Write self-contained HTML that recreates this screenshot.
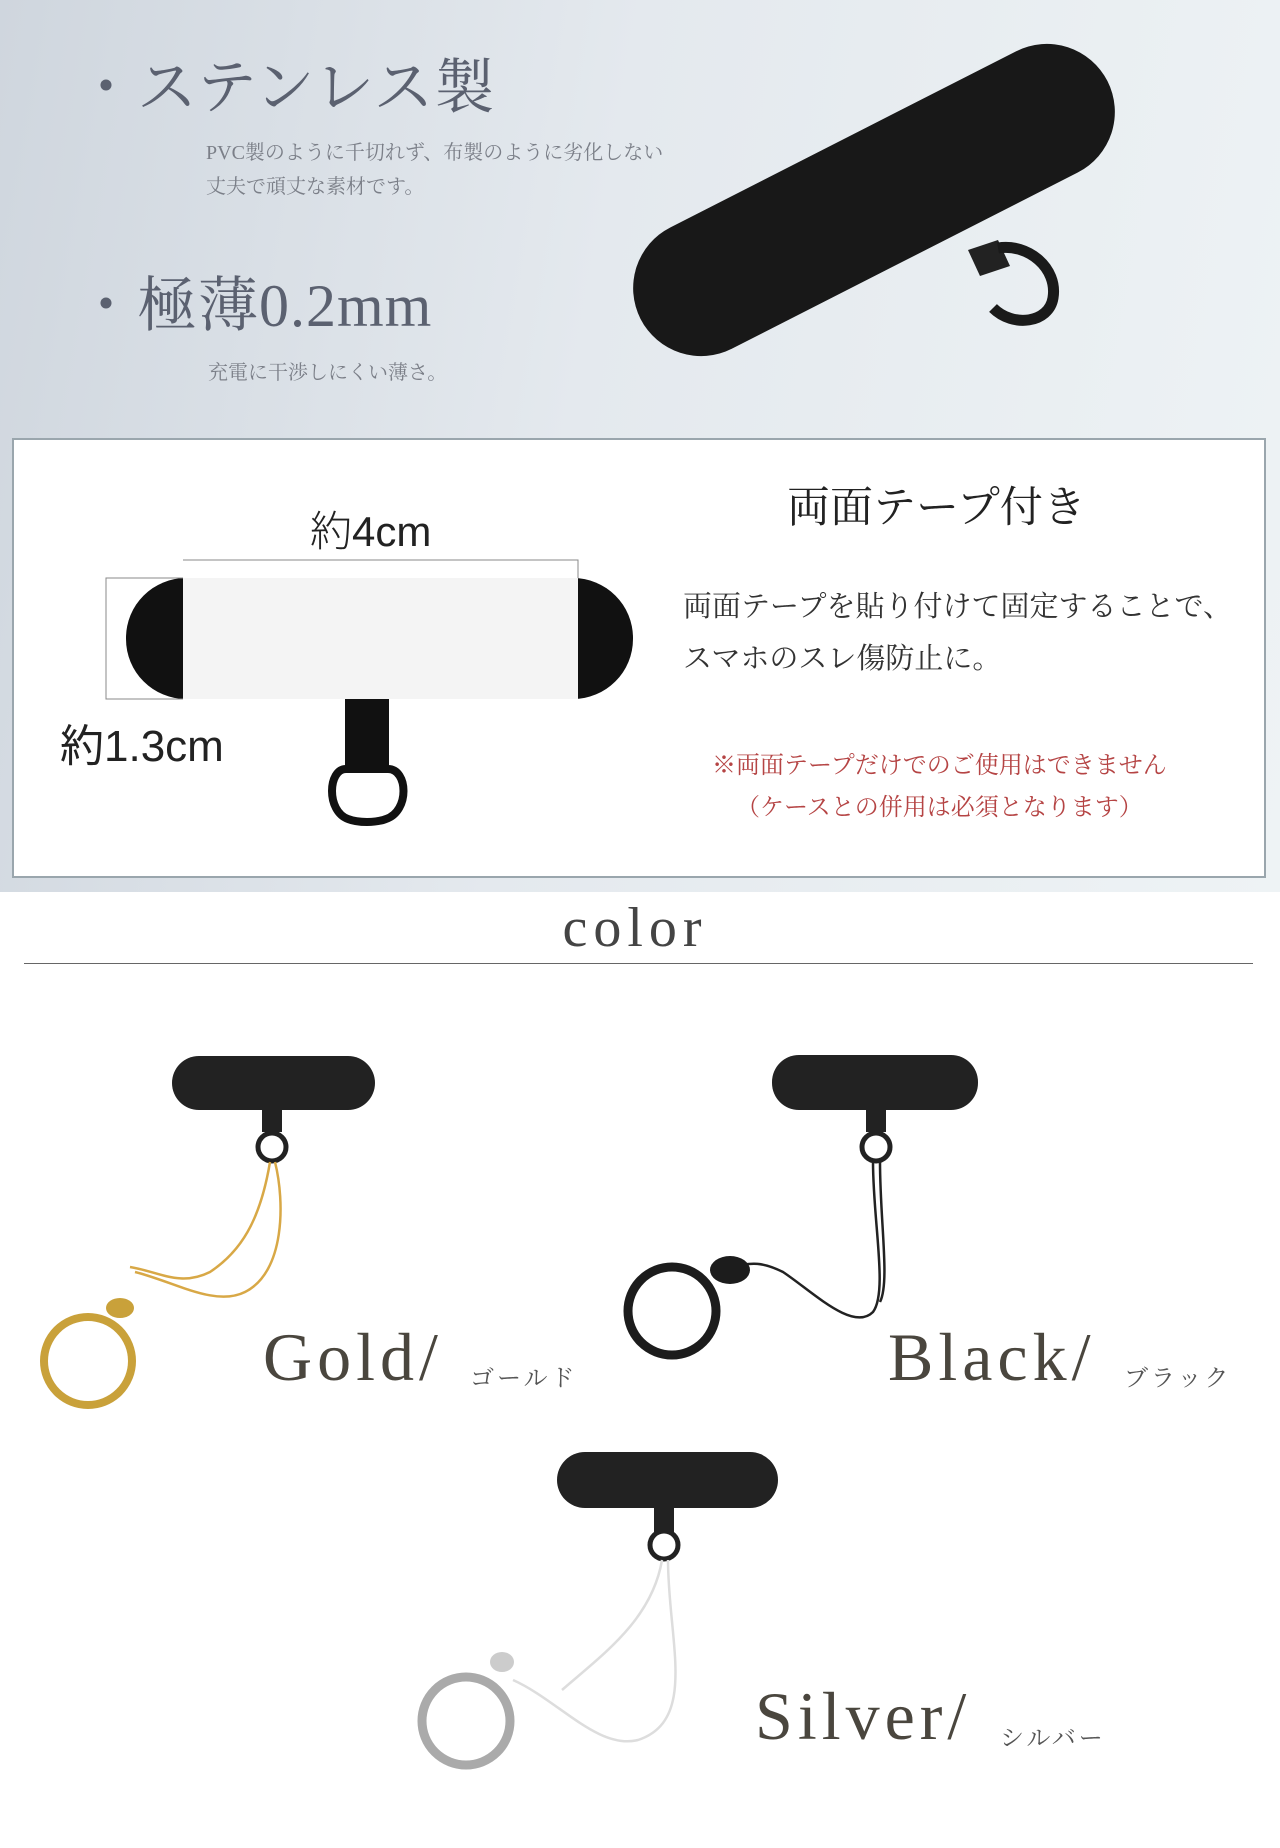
<!DOCTYPE html>
<html><head><meta charset="utf-8"><style>
*{margin:0;padding:0;box-sizing:border-box}
body{width:1280px;height:1848px;position:relative;background:#fff;overflow:hidden;font-family:"Liberation Serif","Noto Serif CJK SC",serif}
.a{position:absolute;white-space:nowrap}
#top{position:absolute;left:0;top:0;width:1280px;height:892px;background:linear-gradient(100deg,#cfd6de 0%,#e4e9ee 45%,#eef3f5 100%)}
.h{font-size:60px;color:#5b6170;letter-spacing:1px}
.s{font-size:20px;color:#7b7f88}
.mid{color:#333;font-size:29px}
.red{color:#b54444;font-size:24px}
.big{font-size:68px;color:#4a463e;letter-spacing:5px}
.sm{font-size:24px;color:#555;letter-spacing:3px}
</style></head><body>
<div id="top"></div>
<div class="a h" style="left:76px;top:40px">・ステンレス製</div>
<div class="a s" style="left:206px;top:136px">PVC製のように千切れず、布製のように劣化しない</div>
<div class="a s" style="left:206px;top:170px">丈夫で頑丈な素材です。</div>
<div class="a h" style="left:76px;top:258px">・極薄0.2mm</div>
<div class="a s" style="left:208px;top:356px">充電に干渉しにくい薄さ。</div>
<svg class="a" style="left:600px;top:40px" width="540" height="340" viewBox="0 0 540 340">
<g transform="translate(274,160) rotate(-27)">
<rect x="-262" y="-68" width="524" height="136" rx="68" fill="#181818"/>
</g>
<path d="M368 210 l12 26 l30 -10 l-12 -26z" fill="#222"/>
<path d="M398 208 c30 -5 60 20 55 50 c-4 25 -40 30 -60 10" fill="none" stroke="#1a1a1a" stroke-width="11"/>
</svg>
<div class="a" style="left:12px;top:438px;width:1254px;height:440px;border:2px solid #9aa6ad;background:#fff"></div>
<div class="a" style="left:310px;top:498px;font-family:'Liberation Sans','Noto Sans CJK JP',sans-serif;font-size:42px;color:#222;font-weight:300">約4cm</div>
<svg class="a" style="left:100px;top:555px" width="540" height="280" viewBox="0 0 540 280">
<rect x="26" y="23" width="507" height="121" rx="60" fill="#111"/>
<rect x="83" y="23" width="395" height="121" fill="#f4f4f4"/>
<path d="M83 5 H478 V23" fill="none" stroke="#888" stroke-width="1"/>
<path d="M83 23 H6 V144 H83" fill="none" stroke="#888" stroke-width="1"/>
<rect x="245" y="144" width="44" height="74" fill="#111"/>
<path d="M246 214 h42 c20 0 22 42 -2 50 c-10 4 -28 4 -38 0 c-22 -8 -20 -50 -2 -50z" fill="none" stroke="#111" stroke-width="8"/>
</svg>
<div class="a" style="left:60px;top:710px;font-family:'Liberation Sans','Noto Sans CJK JP',sans-serif;font-size:44px;color:#222">約1.3cm</div>
<div class="a" style="left:787px;top:474px;font-size:43px;color:#222">両面テープ付き</div>
<div class="a mid" style="left:683px;top:584px">両面テープを貼り付けて固定することで、</div>
<div class="a mid" style="left:683px;top:636px">スマホのスレ傷防止に。</div>
<div class="a red" style="left:712px;top:745px">※両面テープだけでのご使用はできません</div>
<div class="a red" style="left:736px;top:787px">（ケースとの併用は必須となります）</div>
<div class="a" style="left:0;width:1270px;text-align:center;top:896px;font-size:56px;color:#444;letter-spacing:6px">color</div>
<div class="a" style="left:24px;top:963px;width:1229px;height:1px;background:#666"></div>
<svg class="a" style="left:0;top:1040px" width="1280" height="808" viewBox="0 1040 1280 808">
<rect x="172" y="1056" width="203" height="54" rx="27" fill="#222"/>
<rect x="262" y="1110" width="20" height="22" fill="#222"/>
<ellipse cx="272" cy="1147" rx="14" ry="14" fill="none" stroke="#222" stroke-width="5"/>
<path d="M270 1162 c-10 60 -30 90 -60 110 c-30 15 -50 0 -80 -5 M275 1162 c10 40 10 110 -30 130 c-30 15 -70 -10 -110 -20" fill="none" stroke="#d8a846" stroke-width="2.5"/>
<circle cx="88" cy="1361" r="44" fill="none" stroke="#c9a13a" stroke-width="8"/>
<ellipse cx="120" cy="1308" rx="14" ry="10" fill="#c9a13a"/>
<rect x="772" y="1055" width="206" height="55" rx="27" fill="#222"/>
<rect x="866" y="1110" width="20" height="22" fill="#222"/>
<ellipse cx="876" cy="1147" rx="14" ry="14" fill="none" stroke="#222" stroke-width="5"/>
<path d="M873 1162 c0 60 15 130 0 150 c-20 20 -60 -20 -90 -40 c-20 -10 -30 -10 -55 -5 M880 1162 c0 60 10 120 0 140" fill="none" stroke="#222" stroke-width="2.5"/>
<circle cx="672" cy="1311" r="44" fill="none" stroke="#1c1c1c" stroke-width="9"/>
<ellipse cx="730" cy="1270" rx="20" ry="14" fill="#1c1c1c"/>
<rect x="557" y="1452" width="221" height="56" rx="28" fill="#222"/>
<rect x="654" y="1508" width="20" height="24" fill="#222"/>
<ellipse cx="664" cy="1545" rx="14" ry="14" fill="none" stroke="#222" stroke-width="5"/>
<path d="M662 1560 c-10 60 -60 95 -100 130 M668 1560 c0 80 30 160 -30 180 c-40 10 -80 -40 -125 -60" fill="none" stroke="#ddd" stroke-width="2.5"/>
<circle cx="466" cy="1721" r="44" fill="none" stroke="#aaa" stroke-width="9"/>
<ellipse cx="502" cy="1662" rx="12" ry="10" fill="#ccc"/>
</svg>
<div class="a big" style="left:263px;top:1318px">Gold/</div>
<div class="a sm" style="left:470px;top:1358px">ゴールド</div>
<div class="a big" style="left:888px;top:1318px">Black/</div>
<div class="a sm" style="left:1124px;top:1358px">ブラック</div>
<div class="a big" style="left:755px;top:1677px">Silver/</div>
<div class="a sm" style="left:1000px;top:1718px">シルバー</div>
</body></html>
